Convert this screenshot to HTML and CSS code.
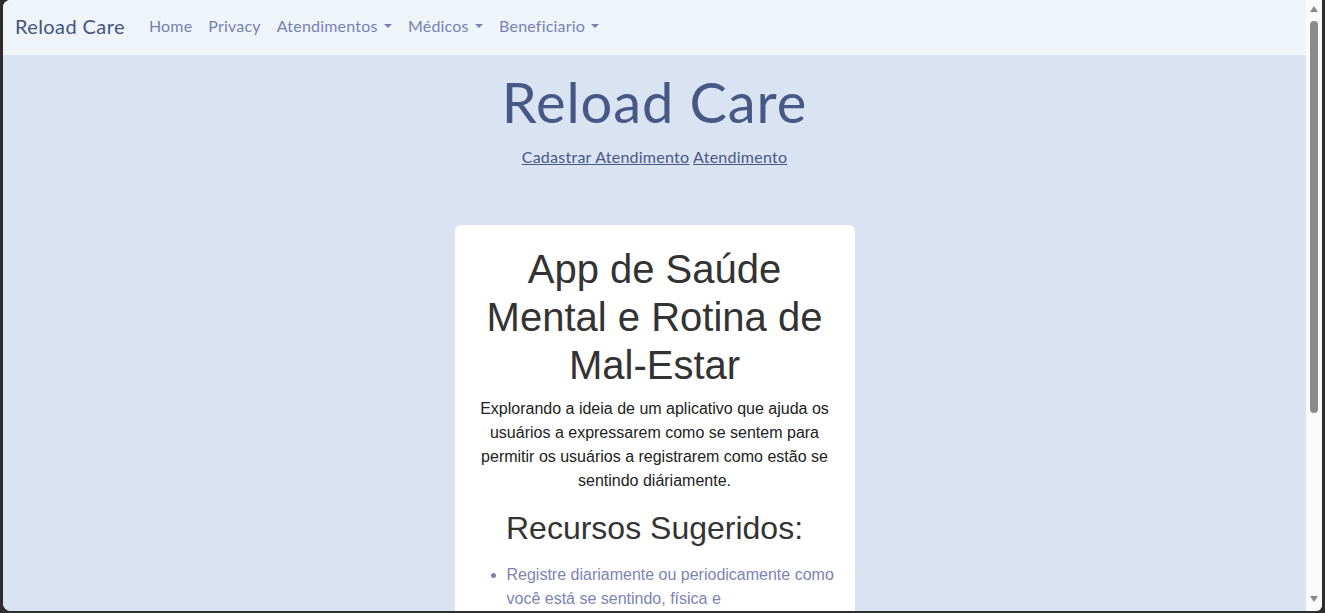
FILE: index.html
```html
<!DOCTYPE html>
<html lang="pt-BR">
<head>
<meta charset="utf-8">
<title>Reload Care</title>
<link rel="stylesheet" href="styles.css">
</head>
<body>
<div class="window">
  <div class="page">
    <nav class="navbar">
      <a class="brand" href="#">Reload Care</a>
      <ul class="nav-links">
        <li><a href="#">Home</a></li>
        <li><a href="#">Privacy</a></li>
        <li><a class="dropdown" href="#">Atendimentos</a></li>
        <li><a class="dropdown" href="#">Médicos</a></li>
        <li><a class="dropdown" href="#">Beneficiario</a></li>
      </ul>
    </nav>
    <main class="main">
      <div class="hero">
        <h1 class="display">Reload Care</h1>
        <p class="hero-links"><a href="#">Cadastrar Atendimento</a> <a href="#">Atendimento</a></p>
      </div>
      <section class="card">
        <h1 class="card-title">App de Saúde Mental e Rotina de Mal-Estar</h1>
        <p class="card-text">Explorando a ideia de um aplicativo que ajuda os usuários a expressarem como se sentem para permitir os usuários a registrarem como estão se sentindo diáriamente.</p>
        <h2 class="card-subtitle">Recursos Sugeridos:</h2>
        <ul class="features">
          <li>Registre diariamente ou periodicamente como você está se sentindo, física e emocionalmente.</li>
          <li>Acompanhe sua rotina.</li>
        </ul>
      </section>
    </main>
  </div>
  <div class="scrollbar">
    <span class="arrow arrow-up"></span>
    <div class="track"><div class="thumb"></div></div>
    <span class="arrow arrow-down"></span>
  </div>
</div>
</body>
</html>
```

FILE: styles.css
```css
html, body {
  margin: 0;
  padding: 0;
}
body {
  background: #2d2d2d;
  height: 613px;
  overflow: hidden;
}
.window {
  display: flex;
  height: 611px;
  margin: 0 3px 0 3px;
  border-radius: 8px 0 6px 8px;
  overflow: hidden;
  background: #fafafa;
}
.page {
  width: 1303px;
  flex: none;
  background: #dae3f2;
  overflow: hidden;
  font-family: "Lato", "Open Sans", sans-serif;
}
.navbar {
  height: 55px;
  box-sizing: border-box;
  padding: 0 12px 4px;
  background: #eff4f9;
  display: flex;
  align-items: center;
}
.brand {
  font-size: 20px;
  color: #44547f;
  text-decoration: none;
  margin-right: 16px;
  letter-spacing: 0.4px;
}
.nav-links {
  list-style: none;
  display: flex;
  margin: 0;
  padding: 0;
}
.nav-links a {
  display: block;
  padding: 0 8px;
  font-size: 16px;
  letter-spacing: 0.2px;
  color: #7781b6;
  text-decoration: none;
}
.dropdown::after {
  content: "";
  display: inline-block;
  margin-left: 0.4em;
  vertical-align: 0.255em;
  border-top: 0.3em solid;
  border-left: 0.3em solid transparent;
  border-right: 0.3em solid transparent;
}
.main {
  padding-top: 13px;
}
.hero {
  text-align: center;
}
.display {
  margin: 0 0 10px;
  font-size: 56px;
  font-weight: 400;
  letter-spacing: 0.9px;
  line-height: 1.2;
  color: #475887;
}
.hero-links {
  margin: 0;
  font-size: 16px;
  line-height: 24px;
  letter-spacing: 0.25px;
}
.hero-links a {
  color: #475887;
}
.card {
  width: 360px;
  margin: 56px auto 0;
  background: #ffffff;
  border-radius: 6px;
  padding: 20px;
  text-align: center;
  font-family: "Liberation Sans", Arial, sans-serif;
  color: #333333;
}
.card-title {
  margin: 0 0 8px;
  font-size: 40px;
  font-weight: 400;
  line-height: 48px;
  color: #333333;
}
.card-text {
  margin: 0 0 16px;
  font-size: 16px;
  line-height: 24px;
  color: #222222;
}
.card-subtitle {
  margin: 0 0 16px;
  font-size: 32px;
  font-weight: 400;
  line-height: 38px;
  color: #333333;
}
.features {
  margin: 0;
  padding-left: 32px;
  text-align: left;
  font-size: 16px;
  line-height: 24px;
  color: #7b84b5;
}
.scrollbar {
  width: 16px;
  flex: none;
  background: #fafafa;
  display: flex;
  flex-direction: column;
  align-items: center;
}
.arrow {
  width: 0;
  height: 0;
  border-left: 4px solid transparent;
  border-right: 4px solid transparent;
}
.arrow-up {
  margin-top: 6px;
  border-bottom: 6px solid #8a8a8a;
}
.arrow-down {
  margin-bottom: 9px;
  border-top: 6px solid #8a8a8a;
}
.track {
  flex: 1;
  width: 100%;
  display: flex;
  justify-content: center;
  padding-top: 9px;
}
.thumb {
  width: 8px;
  height: 392px;
  border-radius: 4px;
  background: #8a8a8a;
}
```
